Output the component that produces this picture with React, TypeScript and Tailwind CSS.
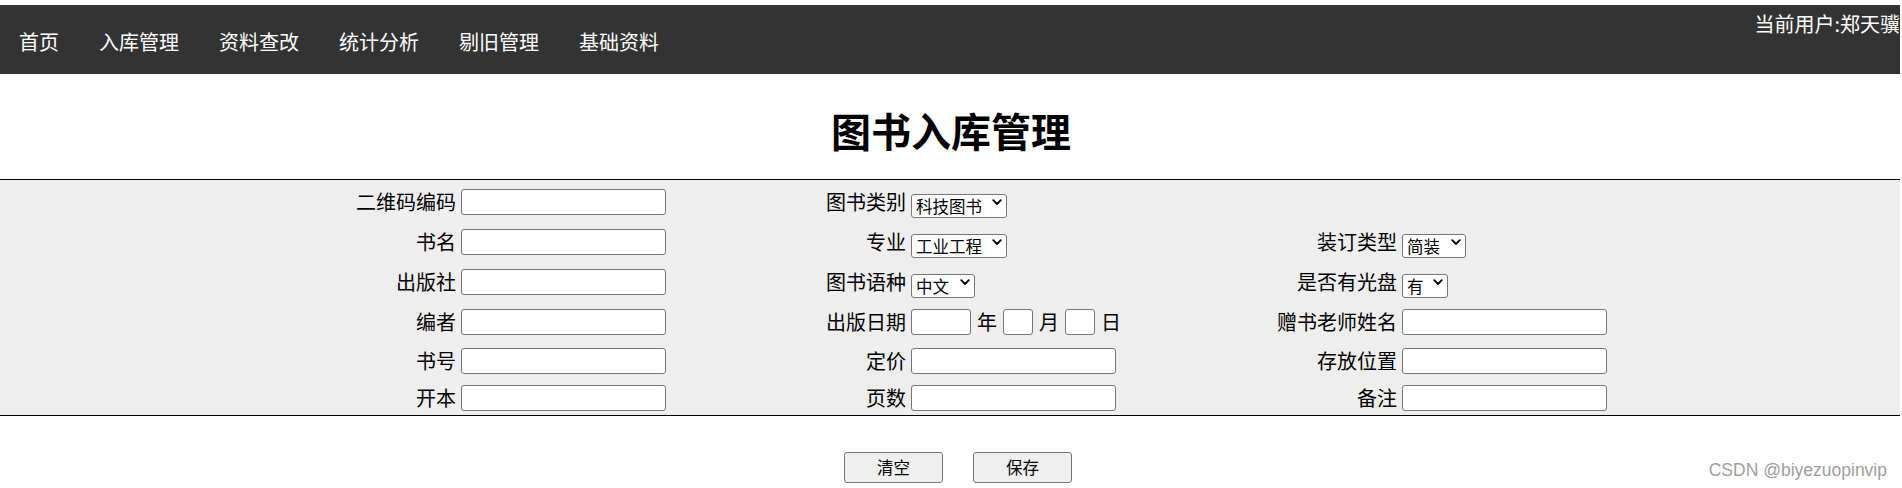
import React from 'react';

type Field =
  | { kind: 'text'; width?: string }
  | { kind: 'select'; value: string; width: string }
  | { kind: 'date' }
  | { kind: 'none' };

interface IRow {
  cells: [string, Field, string, Field, string, Field];
}

const navItems = ['首页', '入库管理', '资料查改', '统计分析', '剔旧管理', '基础资料'];

const rows: IRow[] = [
  { cells: ['二维码编码', { kind: 'text' }, '图书类别', { kind: 'select', value: '科技图书', width: 'w-[96px]' }, '', { kind: 'none' }] },
  { cells: ['书名', { kind: 'text' }, '专业', { kind: 'select', value: '工业工程', width: 'w-[96px]' }, '装订类型', { kind: 'select', value: '简装', width: 'w-[64px]' }] },
  { cells: ['出版社', { kind: 'text' }, '图书语种', { kind: 'select', value: '中文', width: 'w-[64px]' }, '是否有光盘', { kind: 'select', value: '有', width: 'w-[46px]' }] },
  { cells: ['编者', { kind: 'text' }, '出版日期', { kind: 'date' }, '赠书老师姓名', { kind: 'text' }] },
  { cells: ['书号', { kind: 'text' }, '定价', { kind: 'text' }, '存放位置', { kind: 'text' }] },
  { cells: ['开本', { kind: 'text' }, '页数', { kind: 'text' }, '备注', { kind: 'text' }] },
];

function TextBox({ width = 'w-[205px]' }: { width?: string }): React.ReactElement {
  return (
    <input
      type="text"
      className={`${width} h-[26px] bg-white border border-[#767676] rounded-[3px] px-1 text-[16.5px] outline-none`}
    />
  );
}

function SelectBox({ value, width }: { value: string; width: string }): React.ReactElement {
  return (
    <div className={`relative ${width} h-[24px]`}>
      <select
        defaultValue={value}
        className="appearance-none w-full h-full bg-white border border-[#767676] rounded-[3px] pl-[4px] pr-[16px] text-[16.5px] leading-[20px] text-black outline-none"
      >
        <option>{value}</option>
      </select>
      {/* chevron like the browser's own */}
      <svg
        width="10"
        height="7"
        viewBox="0 0 10 7"
        fill="none"
        aria-hidden="true"
        className="absolute right-[5px] top-[9px] pointer-events-none"
      >
        <path d="M1.2 1.2 5 5l3.8-3.8" stroke="#000" strokeWidth="1.8" strokeLinecap="round" strokeLinejoin="round" />
      </svg>
    </div>
  );
}

function FieldCell({ field }: { field: Field }): React.ReactElement {
  if (field.kind === 'text') return <TextBox width={field.width} />;
  if (field.kind === 'select') return <SelectBox value={field.value} width={field.width} />;
  if (field.kind === 'date')
    return (
      <div className="flex items-center gap-[6px]">
        <TextBox width="w-[60px]" />
        <span>年</span>
        <TextBox width="w-[30px]" />
        <span>月</span>
        <TextBox width="w-[30px]" />
        <span>日</span>
      </div>
    );
  return <div />;
}

export default function App(): React.ReactElement {
  return (
    <div className="relative w-[1902px] min-h-[488px] bg-white text-black font-['Microsoft_YaHei','Noto_Sans_CJK_SC',sans-serif]">
      {/* Top nav */}
      <nav className="mt-[5px] w-[1900px] h-[69px] bg-[#333333] flex items-start text-white text-[20px] leading-[20px]">
        <ul className="flex gap-[40px] pl-[19px] pt-[27px]">
          {navItems.map((item) => (
            <li key={item} className="whitespace-nowrap">
              {item}
            </li>
          ))}
        </ul>
        <div className="ml-auto pt-[9px] whitespace-nowrap">当前用户:郑天骥</div>
      </nav>

      {/* Title */}
      <div className="h-[105px] pt-[36px] flex justify-center">
        <h1 className="text-[40px] leading-[40px] font-bold">图书入库管理</h1>
      </div>

      {/* Form */}
      <div className="w-[1900px] bg-[#eeeeee] border-y border-black pt-[2px] text-[20px]">
        <div className="grid grid-cols-[457px_244px_206px_245px_246px_1fr] grid-rows-[40px_40px_40px_39px_39px_35px] items-center">
          {rows.map((row, i) =>
            row.cells.map((cell, j) =>
              typeof cell === 'string' ? (
                <div key={`${i}-${j}`} className="text-right pr-[1px] leading-[20px] whitespace-nowrap">
                  {cell}
                </div>
              ) : (
                <div key={`${i}-${j}`} className="pl-[4px] flex items-center">
                  <FieldCell field={cell} />
                </div>
              ),
            ),
          )}
        </div>
      </div>

      {/* Actions */}
      <div className="w-[1900px] mt-[36px] pl-[16px] flex justify-center gap-[30px]">
        <button className="w-[99px] h-[31px] bg-[#efefef] border border-[#767676] rounded-[3px] text-[16.5px]">
          清空
        </button>
        <button className="w-[99px] h-[31px] bg-[#efefef] border border-[#767676] rounded-[3px] text-[16.5px]">
          保存
        </button>
      </div>

      {/* Watermark */}
      <div className="absolute right-[15px] top-[452px] text-[17.5px] text-[#9e9e9e] font-['Liberation_Sans',Arial,sans-serif]">
        CSDN @biyezuopinvip
      </div>
    </div>
  );
}
